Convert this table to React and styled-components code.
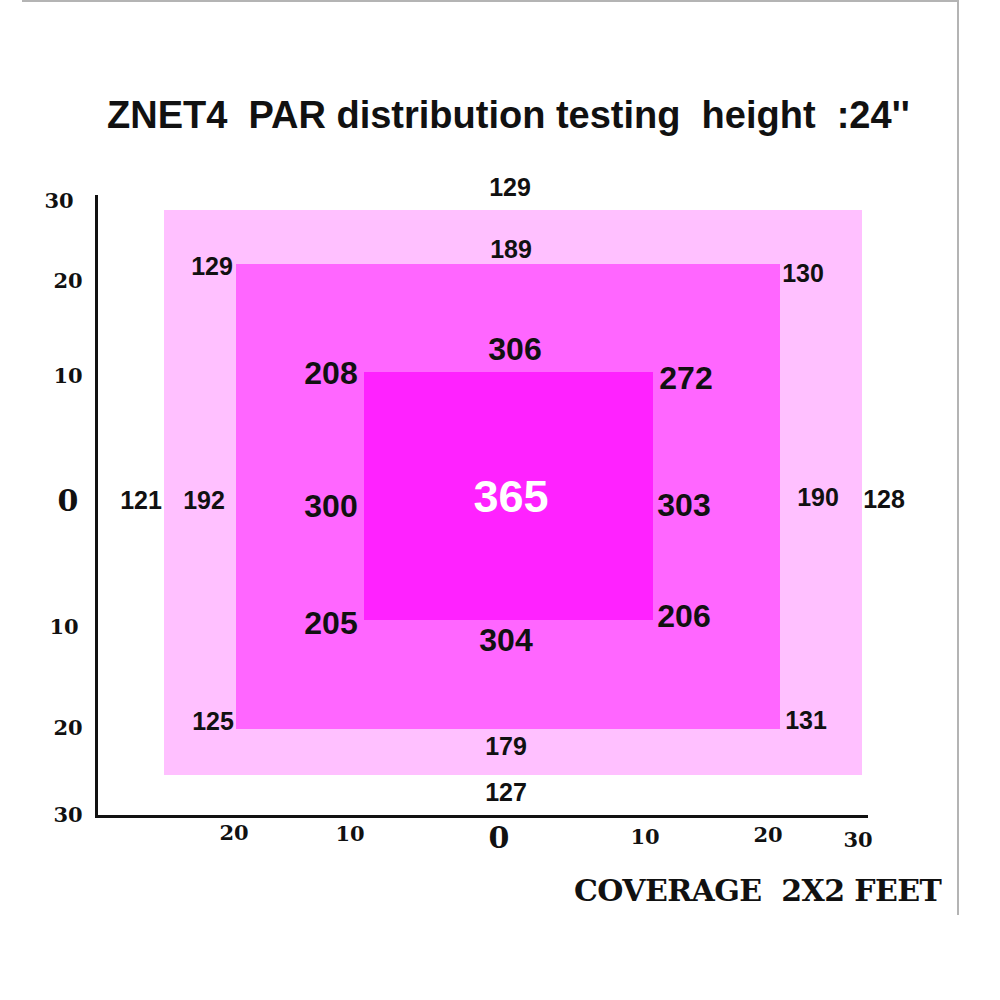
import React from "react";
import styled, { createGlobalStyle } from "styled-components";

const GlobalStyle = createGlobalStyle`
  html, body { margin: 0; padding: 0; background: #ffffff; }
  body { font-family: "Liberation Sans", Arial, sans-serif; color: #111; }
`;

// content origin of the chart layer (page coords)
const FX = 22;
const CHART_TOP = 160;

const Frame = styled.div`
  box-sizing: content-box;
  display: flow-root;
  margin-left: ${FX}px;
  width: 935px;
  height: 913px;
  border-top: 2px solid #b4b4b4;
  border-right: 2px solid #b4b4b4;
`;

const Title = styled.h1`
  margin: 0;
  padding: 94px 0 0 85px;
  font-family: "Liberation Sans", Arial, sans-serif;
  font-weight: 700;
  font-size: 38px;
  line-height: 1;
  white-space: pre;
  color: #111;
`;

const Chart = styled.div`
  position: relative;
  display: flow-root;
  box-sizing: border-box;
  margin-top: 26px;
  padding: 35px 0 0 73px;
  height: 700px;
`;

const Plot = styled.div`
  box-sizing: content-box;
  display: flow-root;
  width: 770px;
  height: 605px;
  padding-top: 15px;
  border-left: 3px solid #111;
  border-bottom: 3px solid #111;
`;

const Zone = styled.div`
  box-sizing: border-box;
  display: flex;
  background: ${(p) => p.$color};
  padding: ${(p) => p.$pad || "0"};
  flex: ${(p) => (p.$fill ? 1 : "none")};
`;

const OuterZone = styled(Zone)`
  margin-left: 66px;
  width: 698px;
  height: 565px;
`;

const Value = styled.span`
  position: absolute;
  left: ${(p) => p.$x - FX}px;
  top: ${(p) => p.$y - CHART_TOP}px;
  transform: translate(-50%, -50%);
  font-family: "Liberation Sans", Arial, sans-serif;
  font-weight: 700;
  font-size: ${(p) => p.$size}px;
  line-height: 1;
  white-space: nowrap;
  color: ${(p) => (p.$light ? "#ffffff" : "#111111")};
`;

const Tick = styled.span`
  position: absolute;
  left: ${(p) => p.$x - FX}px;
  top: ${(p) => p.$y - CHART_TOP}px;
  transform: translate(-50%, -50%);
  font-family: "DejaVu Serif", "Liberation Serif", serif;
  font-weight: 700;
  font-size: ${(p) => (p.$big ? 30 : 21)}px;
  line-height: 1;
  color: #111;
`;

const Caption = styled.div`
  margin: 16px 0 0 552px;
  font-family: "DejaVu Serif", "Liberation Serif", serif;
  font-weight: 700;
  font-size: 30px;
  line-height: 1;
  letter-spacing: -0.6px;
  white-space: pre;
  color: #111;
`;

const values = [
  { v: "129", x: 510, y: 187, s: 25 },
  { v: "189", x: 511, y: 249, s: 25 },
  { v: "129", x: 212, y: 266, s: 25 },
  { v: "130", x: 803, y: 273, s: 25 },
  { v: "306", x: 515, y: 349, s: 32 },
  { v: "208", x: 331, y: 373, s: 32 },
  { v: "272", x: 686, y: 378, s: 32 },
  { v: "121", x: 141, y: 500, s: 25 },
  { v: "192", x: 204, y: 500, s: 25 },
  { v: "300", x: 331, y: 506, s: 32 },
  { v: "365", x: 511, y: 496, s: 45, light: true },
  { v: "303", x: 684, y: 505, s: 32 },
  { v: "190", x: 818, y: 497, s: 25 },
  { v: "128", x: 884, y: 499, s: 25 },
  { v: "205", x: 331, y: 623, s: 32 },
  { v: "206", x: 684, y: 616, s: 32 },
  { v: "304", x: 506, y: 640, s: 32 },
  { v: "125", x: 213, y: 721, s: 25 },
  { v: "131", x: 806, y: 720, s: 25 },
  { v: "179", x: 506, y: 746, s: 25 },
  { v: "127", x: 506, y: 792, s: 25 },
];

const ticks = [
  { v: "30", x: 59, y: 200 },
  { v: "20", x: 68, y: 280 },
  { v: "10", x: 68, y: 375 },
  { v: "0", x: 68, y: 501, big: true },
  { v: "10", x: 64, y: 626 },
  { v: "20", x: 68, y: 727 },
  { v: "30", x: 68, y: 814 },
  { v: "20", x: 234, y: 832 },
  { v: "10", x: 350, y: 833 },
  { v: "0", x: 499, y: 838, big: true },
  { v: "10", x: 645, y: 836 },
  { v: "20", x: 768, y: 834 },
  { v: "30", x: 858, y: 839 },
];

export default function App() {
  return (
    <>
      <GlobalStyle />
      <Frame>
        <Title>{"ZNET4  PAR distribution testing  height  :24''"}</Title>
        <Chart>
          <Plot>
            <OuterZone $color="#ffc0ff" $pad="54px 82px 46px 72px">
              <Zone $color="#ff66ff" $fill $pad="108px 127px 109px 128px">
                <Zone $color="#ff22ff" $fill />
              </Zone>
            </OuterZone>
          </Plot>
          {values.map((d, i) => (
            <Value key={i} $x={d.x} $y={d.y} $size={d.s} $light={d.light}>
              {d.v}
            </Value>
          ))}
          {ticks.map((t, i) => (
            <Tick key={i} $x={t.x} $y={t.y} $big={t.big}>
              {t.v}
            </Tick>
          ))}
        </Chart>
        <Caption>{"COVERAGE  2X2 FEET"}</Caption>
      </Frame>
    </>
  );
}
